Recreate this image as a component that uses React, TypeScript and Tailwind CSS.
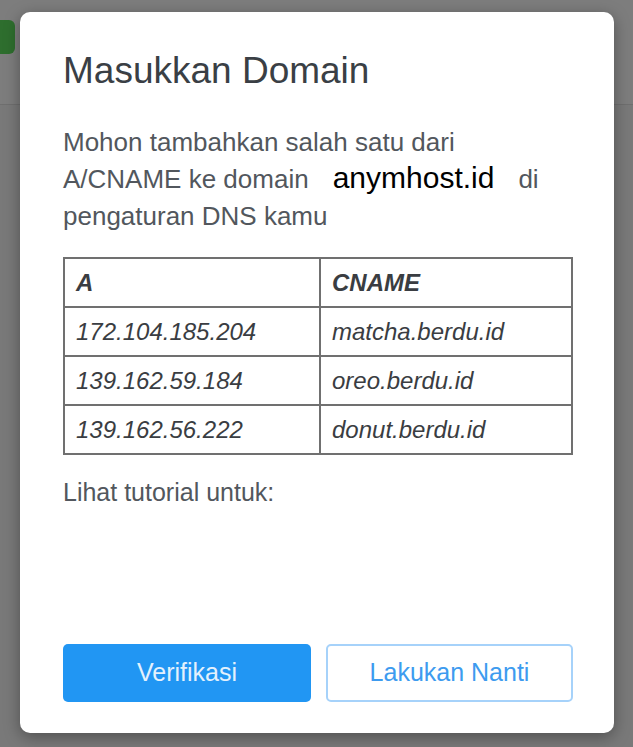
import React from 'react';

const rows = [
  { a: '172.104.185.204', cname: 'matcha.berdu.id' },
  { a: '139.162.59.184', cname: 'oreo.berdu.id' },
  { a: '139.162.56.222', cname: 'donut.berdu.id' },
];

export default function App() {
  return (
    <div
      className="relative w-[633px] h-[747px] overflow-hidden bg-[#797979]"
      style={{ fontFamily: '"Liberation Sans", Arial, sans-serif' }}
    >
      {/* page behind the overlay */}
      <div className="h-[105px] pt-[20px] border-b border-[#6f6f6f] bg-[#7d7d7d]">
        <div className="w-[15px] h-[34px] rounded-r-[6px] bg-[#2e6e2e]" />
      </div>

      <div className="absolute left-[20px] top-[12px] w-[594px] h-[721px] rounded-[10px] bg-white shadow-[0_4px_16px_rgba(0,0,0,0.35)] flex flex-col pl-[43px] pr-[41px] pt-[38px] pb-[31px]">
        <h1 className="text-[37px] leading-[42px] text-[#3a3f45]">Masukkan Domain</h1>

        <p className="mt-[32px] text-[26px] leading-[37px] text-[#52575d] w-[480px]">
          Mohon tambahkan salah satu dari A/CNAME ke domain
          <span className="mx-[24px] text-[30px] leading-[30px] text-black">anymhost.id</span>
          di pengaturan DNS kamu
        </p>

        <table className="mt-[22px] w-[510px] border-collapse text-[24px] italic text-[#3a3d42]">
          <thead>
            <tr className="h-[49px]">
              <th className="w-[256px] border-2 border-[#707070] px-[11px] text-left font-bold">A</th>
              <th className="border-2 border-[#707070] px-[11px] text-left font-bold">CNAME</th>
            </tr>
          </thead>
          <tbody>
            {rows.map(r => (
              <tr key={r.a} className="h-[49px]">
                <td className="border-2 border-[#707070] px-[11px]">{r.a}</td>
                <td className="border-2 border-[#707070] px-[11px]">{r.cname}</td>
              </tr>
            ))}
          </tbody>
        </table>

        <p className="mt-[20px] text-[25px] leading-[34px] text-[#52575d]">Lihat tutorial untuk:</p>

        <div className="mt-auto flex gap-[15px]">
          <button className="w-[248px] h-[58px] rounded-[5px] bg-[#2196f3] text-[25px] text-[#e3f1fd]">
            Verifikasi
          </button>
          <button className="w-[247px] h-[58px] rounded-[5px] border-2 border-[#a6d2fa] bg-white text-[25px] text-[#3d9bef]">
            Lakukan Nanti
          </button>
        </div>
      </div>
    </div>
  );
}
